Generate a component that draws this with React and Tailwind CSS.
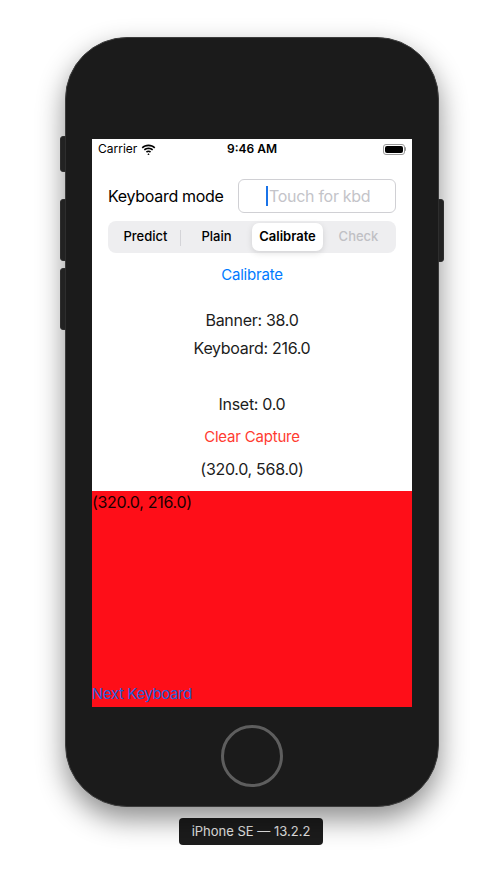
import React from "react";

function Wifi() {
  return (
    <svg width="15" height="11" viewBox="0 0 15 11">
      <path d="M7.5 2.2c2.2 0 4.2.85 5.7 2.25l1.1-1.15C12.5 1.55 10.1.6 7.5.6S2.5 1.55.7 3.3l1.1 1.15C3.3 3.05 5.3 2.2 7.5 2.2z" fill="#000" />
      <path d="M7.5 5.2c1.4 0 2.6.5 3.6 1.4l1.1-1.15C10.95 4.3 9.3 3.6 7.5 3.6s-3.45.7-4.7 1.85L3.9 6.6c1-.9 2.2-1.4 3.6-1.4z" fill="#000" />
      <path d="M7.5 8.1c.6 0 1.1.2 1.5.55l1.1-1.15C9.4 6.85 8.5 6.5 7.5 6.5s-1.9.35-2.6 1l1.1 1.15c.4-.35.9-.55 1.5-.55z M7.5 9.2l1.1 1.2-1.1 .6-1.1-.6z" fill="#000" />
    </svg>
  );
}

function Battery() {
  return (
    <div className="flex items-center">
      <div className="w-[22px] h-[11px] rounded-[3px] border border-[#999] p-[1px]">
        <div className="w-full h-full rounded-[2px] bg-black" />
      </div>
      <div className="w-[1.5px] h-[4px] bg-[#999] rounded-r-sm" />
    </div>
  );
}

export default function App() {
  const font = { fontFamily: "Inter, 'Liberation Sans', sans-serif" };
  return (
    <div className="w-[504px] h-[882px] bg-white relative overflow-hidden" style={font}>
      <div className="pt-[37px] pl-[65px]">
        <div className="relative w-[374px] h-[770px] rounded-[62px] bg-[#1b1b1b] border border-[#3c3c3c] shadow-[0_12px_28px_rgba(0,0,0,0.45)] flex flex-col items-center pt-[101px]">
          {/* side buttons */}
          <div className="absolute left-[-6px] top-[98px] w-[6px] h-[36px] rounded-l-[3px] bg-[#222] border border-[#2e2e2e]" />
          <div className="absolute left-[-6px] top-[161px] w-[6px] h-[62px] rounded-l-[3px] bg-[#222] border border-[#2e2e2e]" />
          <div className="absolute left-[-6px] top-[230px] w-[6px] h-[62px] rounded-l-[3px] bg-[#222] border border-[#2e2e2e]" />
          <div className="absolute right-[-6px] top-[161px] w-[6px] h-[63px] rounded-r-[3px] bg-[#222] border border-[#2e2e2e]" />

          {/* screen */}
          <div className="w-[320px] h-[568px] bg-white flex flex-col">
            {/* status bar */}
            <div className="h-[20px] flex items-center justify-between px-[6px] relative">
              <div className="flex items-center gap-[4px]">
                <span className="text-[12px] text-black">Carrier</span>
                <Wifi />
              </div>
              <span className="absolute left-0 right-0 text-center text-[12px] font-semibold text-black pointer-events-none">9:46 AM</span>
              <Battery />
            </div>
            {/* keyboard mode row */}
            <div className="mt-[20px] h-[34px] flex items-center px-[16px] justify-between">
              <span className="text-[16px] tracking-[-0.3px] text-black">Keyboard mode</span>
              <div className="w-[158px] h-[34px] rounded-[6px] border border-[#d0d0d4] flex items-center pl-[27px]">
                <div className="w-[2px] h-[20px] bg-[#1a73e8] mr-[1px]" />
                <span className="text-[16px] tracking-[-0.3px] text-[#c4c4c9]">Touch for kbd</span>
              </div>
            </div>
            {/* segmented */}
            <div className="mt-[8px] mx-[16px] h-[32px] rounded-[8px] bg-[#eeeef0] grid grid-cols-4 p-[2px] relative">
              <div className="flex items-center justify-center text-[13px] font-medium text-black">Predict</div>
              <div className="flex items-center justify-center text-[13px] font-medium text-black relative">
                <div className="absolute left-[-1px] top-[7px] w-[1px] h-[16px] bg-[#d4d4d8]" />
                Plain
              </div>
              <div className="flex items-center justify-center text-[13px] font-semibold text-black bg-white rounded-[7px] shadow-[0_2px_6px_rgba(0,0,0,0.12)]">Calibrate</div>
              <div className="flex items-center justify-center text-[13px] font-medium text-[#c0c0c4]">Check</div>
            </div>
            {/* rows */}
            <div className="h-[44px] flex items-center justify-center text-[15px] tracking-[-0.2px] text-[#007aff]">Calibrate</div>
            <div className="mt-[12px] h-[22px] flex items-center justify-center text-[16px] tracking-[-0.3px] text-[#1c1c1c]">Banner: 38.0</div>
            <div className="mt-[6px] h-[22px] flex items-center justify-center text-[16px] tracking-[-0.3px] text-[#1c1c1c]">Keyboard: 216.0</div>
            <div className="mt-[34px] h-[22px] flex items-center justify-center text-[16px] tracking-[-0.3px] text-[#1c1c1c]">Inset: 0.0</div>
            <div className="mt-[11px] h-[22px] flex items-center justify-center text-[15px] tracking-[-0.2px] text-[#ff3b30]">Clear Capture</div>
            <div className="mt-[10px] h-[22px] flex items-center justify-center text-[16px] tracking-[-0.3px] text-[#1c1c1c]">(320.0, 568.0)</div>
            {/* keyboard area */}
            <div className="mt-[11px] flex-1 bg-[#fe0e18] flex flex-col justify-between">
              <div className="h-[22px] flex items-center text-[16px] tracking-[-0.3px] text-[#1a0000]">(320.0, 216.0)</div>
              <div className="h-[26px] flex items-center text-[15px] tracking-[-0.4px] text-[#2560d8]">Next Keyboard</div>
            </div>
          </div>

          {/* home button */}
          <div className="mt-[18px] w-[62px] h-[62px] rounded-full border-[3px] border-[#5e5e5e]" />
        </div>
        <div className="mt-[11px] ml-[114px] w-[144px] h-[27px] rounded-[4px] bg-[#1c1c1c] flex items-center justify-center text-[13px] text-[#e6e6e6]">
          iPhone SE — 13.2.2
        </div>
      </div>
    </div>
  );
}
